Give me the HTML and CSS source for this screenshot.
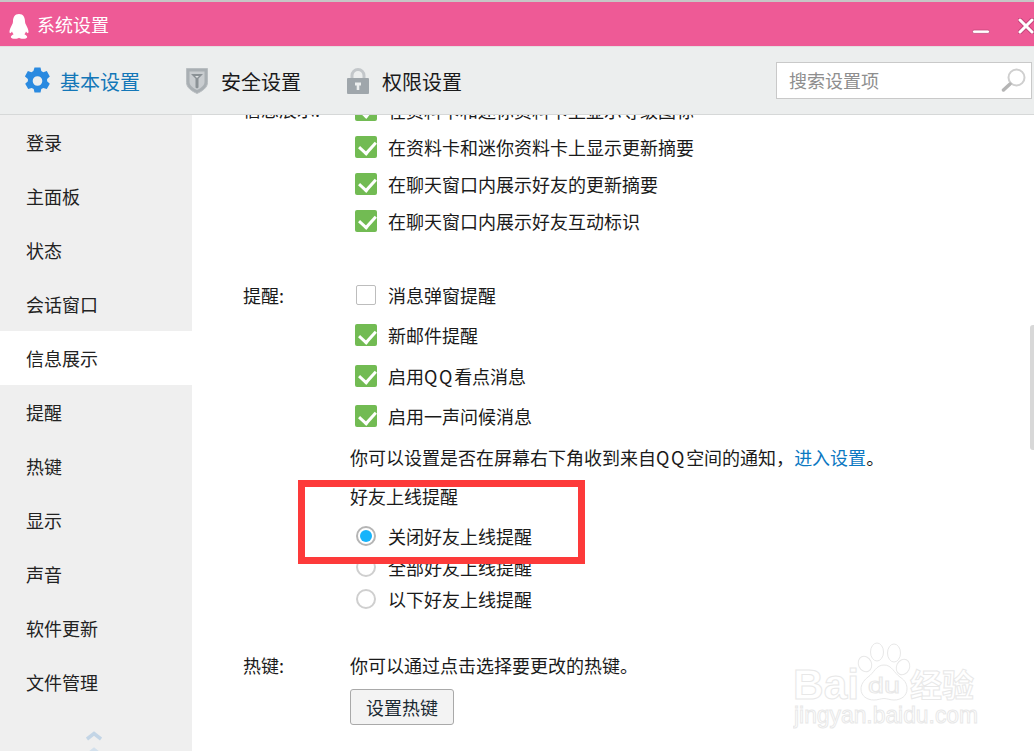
FILE: index.html
```html
<!DOCTYPE html>
<html lang="zh-CN">
<head>
<meta charset="utf-8">
<title>系统设置</title>
<link rel="stylesheet" href="styles.css">
</head>
<body>
<div class="window">
  <header class="titlebar">
    <svg class="qq" width="20" height="25" viewBox="0 0 20 25"><path fill="#fff" d="M10 0C5.6 0 4 3.6 4 7.5c0 1.3-.4 2.200-1 3.300C1.600 13.500.5 15.800.5 17.800c0 1.200.5 1.600 1 1.300.5-.3 1-1 1.500-1.700.3 1 .8 2 1.600 2.800C3.400 21 1.800 21.800 1.800 23c0 1.300 2.200 1.800 4.500 1.800 1.500 0 2.800-.4 3.700-1 .9.600 2.200 1 3.700 1 2.300 0 4.500-.5 4.500-1.800 0-1.200-1.600-2-2.800-2.800.8-.8 1.300-1.800 1.600-2.800.5.700 1 1.400 1.500 1.700.5.300 1-.1 1-1.300 0-2-1.100-4.300-2.500-7-.6-1.100-1-2-1-3.300C16 3.600 14.400 0 10 0z"/></svg>
    <span class="title">系统设置</span>
    <div class="winbtns">
      <svg class="min" width="18" height="5" viewBox="0 0 18 5"><rect x=".5" y="1" width="17" height="3.400" rx="1.500" fill="#fff" stroke="#c5487c" stroke-width=".8"/></svg>
      <svg class="close" width="16" height="16" viewBox="0 0 16 16"><path d="M2 2l12 12M14 2L2 14" stroke="#c5487c" stroke-width="5" stroke-linecap="round"/><path d="M2 2l12 12M14 2L2 14" stroke="#fff" stroke-width="3" stroke-linecap="round"/></svg>
    </div>
  </header>

  <nav class="toolbar">
    <div class="tab active">
      <svg class="gear" width="25" height="28" viewBox="0 0 25 28"><path fill="#2a8ae0" fill-rule="evenodd" d="M9.500 0h6l.8 3.600 2 1.100 3.500-1.100 3 5.300-2.700 2.500v2.300l2.700 2.500-3 5.300-3.500-1.100-2 1.100-.8 3.600h-6l-.8-3.600-2-1.100-3.500 1.100-3-5.300 2.700-2.500v-2.300L-.1 8.900l3-5.300 3.500 1.100 2-1.100zM12.500 8.700a4.800 4.800 0 1 0 0 9.600 4.800 4.800 0 0 0 0-9.600z" transform="translate(0 .5)"/></svg>
      <span class="tablabel">基本设置</span>
    </div>
    <div class="tab">
      <svg class="tabicon" width="22" height="26" viewBox="0 0 22 26"><path fill="#a9afb3" stroke="#b9bec1" d="M.5.500h21v14c0 5-5 8.500-10.500 11C5.500 23 .5 19.500.5 14.500z"/><path fill="#c9cdd0" d="M3.500 3.500h15v10.500c0 3.500-3.500 6-7.500 8-4-2-7.500-4.500-7.500-8z"/><path fill="#8b9296" d="M5 6h12l-4.500 4.500v9l-1.500 1-1.500-1v-9z"/><path fill="#dfe2e3" d="M9 8h4l-2 2z"/></svg>
      <span class="tablabel">安全设置</span>
    </div>
    <div class="tab">
      <svg class="tabicon" width="22" height="26" viewBox="0 0 22 26"><path fill="none" stroke="#c3c7ca" stroke-width="3" d="M5 11V7.500a6 6 0 0 1 12 0V11"/><rect y="10" width="22" height="16" rx="1" fill="#9fa6ab"/><path fill="#eceeee" d="M8 14.500h6v3h-1.700v4.500h-2.600v-4.500H8z"/></svg>
      <span class="tablabel">权限设置</span>
    </div>
    <div class="search">
      <span class="placeholder">搜索设置项</span>
      <svg class="searchicon" width="26" height="24" viewBox="0 0 26 24"><circle cx="15.500" cy="9.500" r="8" fill="none" stroke="#cfcfcf" stroke-width="2"/><path d="M9 16l-6.500 6" stroke="#b5b5b5" stroke-width="3.500" stroke-linecap="round"/></svg>
    </div>
  </nav>

  <div class="main">
    <aside class="sidebar">
      <div class="navitem">登录</div>
      <div class="navitem">主面板</div>
      <div class="navitem">状态</div>
      <div class="navitem">会话窗口</div>
      <div class="navitem selected">信息展示</div>
      <div class="navitem">提醒</div>
      <div class="navitem">热键</div>
      <div class="navitem">显示</div>
      <div class="navitem">声音</div>
      <div class="navitem">软件更新</div>
      <div class="navitem">文件管理</div>
      <svg class="chevrons" width="16" height="24" viewBox="0 0 16 24"><path d="M1 8l7-5.500L15 8" fill="none" stroke="#c3d5e6" stroke-width="3.500"/><path d="M1 24l7-5.500L15 24" fill="none" stroke="#d3e0ec" stroke-width="3.500"/></svg>
    </aside>

    <section class="content">
      <div class="group first">
        <div class="label">信息展示:</div>
        <div class="options">
          <div class="row r37"><i class="check"></i>在资料卡和迷你资料卡上显示等级图标</div>
          <div class="row r37"><i class="check"></i>在资料卡和迷你资料卡上显示更新摘要</div>
          <div class="row r37"><i class="check"></i>在聊天窗口内展示好友的更新摘要</div>
          <div class="row r37"><i class="check"></i>在聊天窗口内展示好友互动标识</div>
        </div>
      </div>

      <div class="group second">
        <div class="label l40">提醒:</div>
        <div class="options">
          <div class="row r40"><i class="check off"></i>消息弹窗提醒</div>
          <div class="row r40"><i class="check"></i>新邮件提醒</div>
          <div class="row r40"><i class="check"></i>启用<span class="latin">QQ</span>看点消息</div>
          <div class="row r40"><i class="check"></i>启用一声问候消息</div>
          <p class="para notice">你可以设置是否在屏幕右下角收到来自<span class="latin">QQ</span>空间的通知，<a class="link">进入设置</a>。</p>
          <p class="para heading">好友上线提醒</p>
          <div class="row r32 shift"><i class="radio on"></i>关闭好友上线提醒</div>
          <div class="row r32"><i class="radio"></i>全部好友上线提醒</div>
          <div class="row r32"><i class="radio"></i>以下好友上线提醒</div>
        </div>
      </div>

      <div class="group third">
        <div class="label l40">热键:</div>
        <div class="options">
          <p class="para">你可以通过点击选择要更改的热键。</p>
          <button class="btn" type="button">设置热键</button>
        </div>
      </div>
    </section>
  </div>

  <div class="scrollthumb"></div>
  <div class="redbox"></div>

  <svg class="watermark" width="190" height="95" viewBox="0 0 190 95">
    <g fill="#fff" stroke="#e8e8e8" stroke-width="1">
      <ellipse cx="84" cy="12" rx="6.500" ry="9"/>
      <ellipse cx="101" cy="13" rx="6.500" ry="9"/>
      <ellipse cx="72" cy="24" rx="6.500" ry="8" transform="rotate(-25 72 24)"/>
      <ellipse cx="110" cy="27" rx="6.500" ry="8" transform="rotate(25 110 27)"/>
      <path d="M91 25c8 0 10 8 16 12 6 4 7 8 7 12 0 7-6 11-13 11-4 0-7-1.500-10-1.500S85 60 81 60c-7 0-13-4-13-11 0-4 2-8 7-12 6-4 8-12 16-12z"/>
      <text class="wm-big" x="0" y="59" textLength="66" lengthAdjust="spacingAndGlyphs">Bai</text>
      <text class="wm-du" x="75" y="53" textLength="32" lengthAdjust="spacingAndGlyphs">du</text>
      <text class="wm-cn" x="117" y="57" textLength="64" lengthAdjust="spacingAndGlyphs">经验</text>
      <text class="wm-url" x="1" y="83" textLength="184" lengthAdjust="spacingAndGlyphs">jingyan.baidu.com</text>
    </g>
  </svg>
</div>
</body>
</html>
```
FILE: styles.css
```css
* { box-sizing: border-box; }
html, body { margin: 0; padding: 0; background: #fff; }
body {
  width: 1034px;
  height: 751px;
  overflow: hidden;
  font-family: "Noto Sans CJK SC", "Noto Sans", sans-serif;
  font-size: 18px;
  color: #1a1a1a;
}
.window { position: relative; width: 1034px; height: 751px; overflow: hidden; }

.titlebar {
  height: 47px;
  border-top: 2px solid #c6c6c6;
  border-bottom: 1px solid #e3dfe0;
  background: #ee5a96;
  display: flex;
  align-items: center;
  padding-left: 9px;
  color: #fff;
}
.qq { flex: none; margin-top: 4px; }
.title { margin-left: 8px; margin-top: -1px; line-height: 24px; }
.winbtns { margin-left: auto; display: flex; align-items: flex-start; height: 100%; }
.min { margin-top: 27px; }
.close { margin: 16px 0 0 28px; flex: none; }

.toolbar {
  height: 68px;
  background: #eceeee;
  border-bottom: 1px solid #d6d8d8;
  display: flex;
  align-items: center;
  padding: 0 2px 0 25px;
}
.tab { display: flex; align-items: center; margin-right: 46px; font-size: 20px; color: #1a1a1a; line-height: 28px; }
.tab.active { color: #1377b8; }
.tablabel { padding-top: 2px; }
.gear { margin-right: 10px; flex: none; }
.tabicon { margin-right: 13px; flex: none; }
.search {
  margin-left: auto;
  margin-top: -1px;
  width: 256px;
  height: 37px;
  background: #fff;
  border: 1px solid #c9c9c9;
  display: flex;
  align-items: center;
  justify-content: space-between;
  padding: 0 4px 0 12px;
}
.placeholder { color: #8e8e8e; line-height: 30px; }
.searchicon { flex: none; }

.main { display: flex; height: 636px; }
.sidebar {
  position: relative;
  width: 192px;
  flex: none;
  background: #efefef;
}
.navitem {
  height: 54px;
  line-height: 54px;
  padding-left: 26px;
  color: #222;
}
.navitem.selected { background: #fff; }
.chevrons { position: absolute; left: 86px; top: 616px; }

.content { flex: 1; padding-left: 51px; overflow: hidden; min-width: 0; }
.group { display: flex; }
.group.first { margin-top: -24px; }
.group.second { margin-top: 36px; }
.group.third { margin-top: 30px; }
.label { width: 107px; flex: none; line-height: 37px; }
.label.l40 { line-height: 40px; }
.options { flex: 1; min-width: 0; }
.row { display: flex; align-items: center; padding-left: 5px; white-space: nowrap; }
.r37 { height: 37px; }
.r40 { height: 40.3px; }
.r32 { height: 32px; }
.shift { padding-top: 2px; }
.latin { letter-spacing: 1.700px; }
.para { margin: 0; height: 40px; line-height: 40px; white-space: nowrap; }
.para.notice { margin-top: 1px; }
.para.heading { height: 42px; line-height: 38px; }
.link { color: #0b78c2; }

.check {
  position: relative;
  flex: none;
  width: 22px;
  height: 22px;
  margin-right: 11px;
  background: #72bb53;
  border-radius: 2px;
}
.check::after {
  content: "";
  position: absolute;
  left: 7px;
  top: 2.500px;
  width: 8px;
  height: 13px;
  border: solid #fff;
  border-width: 0 3.500px 3.500px 0;
  transform: rotate(42deg);
}
.check.off {
  width: 20px;
  height: 20px;
  margin: 0 12px 0 1px;
  background: #fff;
  border: 1px solid #bdbdbd;
}
.check.off::after { display: none; }

.radio {
  position: relative;
  flex: none;
  width: 20px;
  height: 20px;
  margin: 0 12px 0 1px;
  border-radius: 50%;
  border: 2px solid #cfcfcf;
  background: #fff;
}
.radio.on { border-color: #b5b5b5; }
.radio.on::after {
  content: "";
  position: absolute;
  left: 2px;
  top: 2px;
  width: 12px;
  height: 12px;
  border-radius: 50%;
  background: #16b4fb;
}

.btn {
  display: block;
  margin-top: 4px;
  width: 104px;
  height: 36px;
  padding: 0;
  background: #f3f3f3;
  border: 1px solid #a9a9a9;
  border-radius: 3px;
  font: inherit;
  color: #1a2a33;
}

.scrollthumb {
  position: absolute;
  right: 0;
  top: 325px;
  width: 4px;
  height: 125px;
  background: #d8d8d8;
  border-radius: 3px 0 0 3px;
}
.redbox {
  position: absolute;
  left: 298px;
  top: 480px;
  width: 287px;
  height: 84px;
  border: 7px solid #fd3a3a;
}
.watermark { position: absolute; left: 793px; top: 640px; }
.wm-big { font-family: "Liberation Sans", sans-serif; font-weight: 700; font-size: 42px; }
.wm-du { font-family: "Liberation Sans", sans-serif; font-size: 22px; }
.wm-cn { font-family: "Noto Sans CJK SC", sans-serif; font-weight: 700; font-size: 32px; }
.wm-url { font-family: "Liberation Sans", sans-serif; font-size: 24px; }
```
